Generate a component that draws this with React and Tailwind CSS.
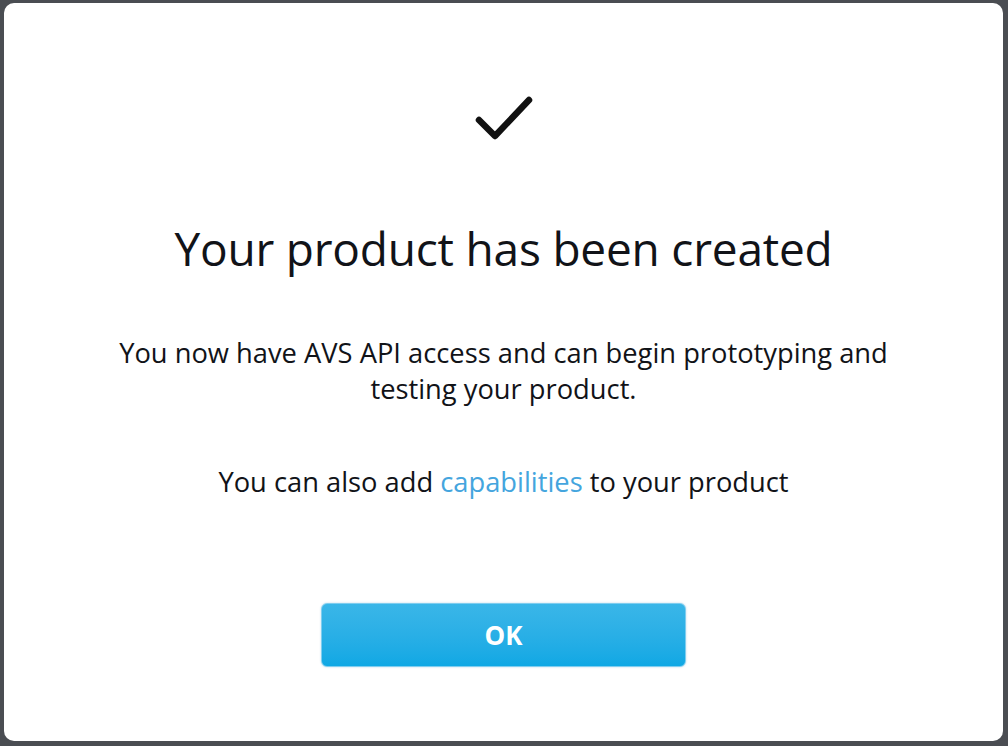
import React from 'react';

const CheckIcon = () => (
    <svg width="60" height="46" viewBox="0 0 60 46" fill="none">
        <path d="M5 25 L21 41 L55 5" stroke="#111111" strokeWidth="6.5" strokeLinecap="round" strokeLinejoin="round" />
    </svg>
);

const App = () => {
    return (
        <div className="h-[746px] w-[1008px] bg-[#4a4d52] pt-[3px] pl-[4px] pr-[5px] pb-[5px] font-['Open_Sans',sans-serif]">
            <div className="h-full w-full bg-white rounded-[10px] flex flex-col items-center text-[#111318]">
                <div className="mt-[92px]">
                    <CheckIcon />
                </div>

                <h1 className="mt-[79px] text-[46px] leading-[56px] font-medium tracking-[-0.2px]">
                    Your product has been created
                </h1>

                <p className="mt-[59px] text-[27.3px] leading-[36px] text-center max-w-[900px]">
                    You now have AVS API access and can begin prototyping and<br />
                    testing your product.
                </p>

                <p className="mt-[57px] text-[27.3px] leading-[36px] text-center">
                    You can also add <a href="#" className="text-[#44a5de]">capabilities</a> to your product
                </p>

                <button className="mt-[103px] w-[365px] h-[64px] rounded-[6px] border border-[#7fcdef] bg-gradient-to-b from-[#3ab6e8] to-[#0fa8e4] text-white text-[26px] font-bold shadow-[0_0_2px_rgba(0,120,180,0.3)]">
                    OK
                </button>
            </div>
        </div>
    );
};

export default App;
